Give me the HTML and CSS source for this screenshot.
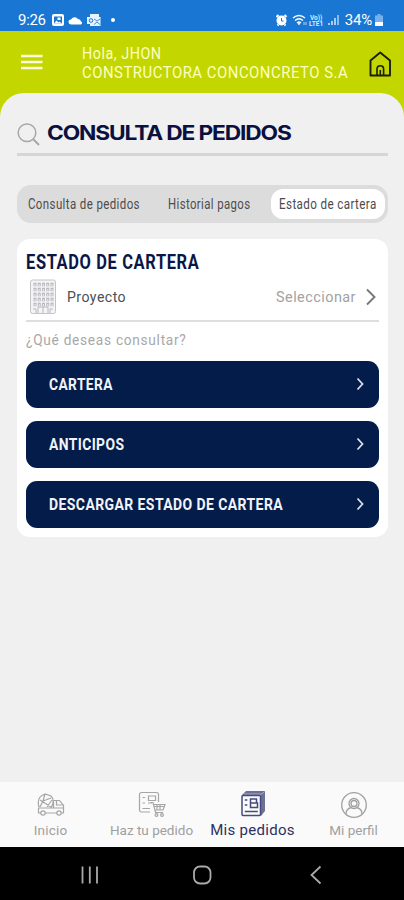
FILE: index.html
```
<!DOCTYPE html>
<html lang="es">
<head>
    <meta charset="UTF-8">
    <title>Consulta de pedidos</title>
    <link rel="stylesheet" href="styles.css">
</head>
<body>
    <div class="status-bar">
        <span class="time">9:26</span>
        <svg class="status-left" width="60" height="14" viewBox="0 0 60 14">
            <rect x="1" y="1" width="12" height="12" rx="2" fill="#fff"/>
            <path d="M3 3.500h8v7H3z" fill="#1976d2"/>
            <path d="M3 10.500l2.500-3 2 2 1-1 2.500 2z" fill="#fff"/>
            <path d="M6.500 4.500h3v2.500h-3z" fill="#fff"/>
            <path d="M20 11.500a2.500 2.500 0 0 1 0-5 4 4 0 0 1 7-.5 3 3 0 0 1 3 2.500 1.600 1.600 0 0 1 0 3z" fill="#fff"/>
            <path d="M39 1h9v3h1.500v9H39v-2h-3V4h3z" fill="#e5f2ff"/>
            <circle cx="40" cy="7.500" r="1.800" fill="none" stroke="#1976d2"/>
            <path d="M43 6l3 2 3-2M43 11.500l3-2.500 3 2.500" fill="none" stroke="#1976d2" stroke-width=".8"/>
        </svg>
        <span class="dot"></span>
        <svg class="status-right" width="66" height="14" viewBox="0 0 66 14">
            <circle cx="6.500" cy="7.500" r="5" fill="#fff"/>
            <path d="M1.500 4l2-2M9.500 2l2 2M2.500 12.500l1-1M10.500 12.500l-1-1" stroke="#fff" stroke-width="2"/>
            <path d="M6.500 5v3h2" fill="none" stroke="#1976d2"/>
            <path d="M18 5q6-5 12 0M20 7.500q4-3.500 8 0M22 10q2-2 4 0" fill="none" stroke="#fff" stroke-width="1.300"/>
            <path d="M23 10h2l-1 2zM29 9v3M31 9v3" fill="#fff" stroke="#d5e8ff" stroke-width=".8"/>
            <text x="35" y="6.500" class="lte">Vo))</text>
            <text x="34" y="13" class="lte">LTE1</text>
            <path d="M54 12v-2M57 12V8M60 12V5" stroke="#d5e8ff" stroke-width="1.500"/>
            <path d="M63 12V2" stroke="#d5e8ff" stroke-width="1.200"/>
        </svg>
        <span class="percent">34%</span>
        <svg class="battery" width="8" height="12" viewBox="0 0 8 12">
            <path d="M2.500 0h3v1.500H8V12H0V1.500h2.500z" fill="#75b0ee"/>
            <path d="M0 8h8v4H0z" fill="#fff"/>
        </svg>
    </div>

    <header class="header">
        <svg class="menu" width="22" height="16" viewBox="0 0 22 16">
            <path d="M0 2h21.500M0 8h21.500M0 14h21.500" stroke="#fbfde0" stroke-width="2.400"/>
        </svg>
        <div class="greeting">
            <div><span class="fit hello">Hola, JHON</span></div>
            <div><span class="fit company">CONSTRUCTORA CONCONCRETO S.A</span></div>
        </div>
        <svg class="home" width="24" height="28" viewBox="0 0 24 28">
            <path d="M2.500 10.500L12.200 2.500 22 10.500V25.500H2.500z" fill="none" stroke="#192000" stroke-width="1.900" stroke-linejoin="round"/>
            <path d="M9 25v-6a3.300 3.300 0 0 1 6.600 0v6M12.300 25v-5" fill="none" stroke="#192000" stroke-width="1.600"/>
        </svg>
    </header>

    <main class="content">
        <div class="search">
            <svg width="24" height="24" viewBox="0 0 24 24">
                <circle cx="10" cy="9.800" r="8.800" fill="none" stroke="#a7a7a7" stroke-width="1.500"/>
                <path d="M16 16l6 6" stroke="#a7a7a7" stroke-width="2"/>
            </svg>
            <h1><span class="fit title">CONSULTA DE PEDIDOS</span></h1>
        </div>

        <div class="tabs">
            <div class="tab tab-orders"><span class="fit">Consulta de pedidos</span></div>
            <div class="tab tab-history"><span class="fit">Historial pagos</span></div>
            <div class="tab tab-wallet active"><span class="fit">Estado de cartera</span></div>
        </div>

        <section class="card">
            <h2><span class="fit card-title">ESTADO DE CARTERA</span></h2>
            <div class="project">
                <svg width="28" height="36" viewBox="0 0 28 36">
                    <rect x="1.500" y="1" width="25" height="33.500" rx="2" fill="#f4f4f6" stroke="#c4c4c8"/>
                    <path d="M4.500 5.500h20M4.500 10.500h20M4.500 15.500h20M4.500 20.500h20M4.500 25.500h20" stroke="#b9b9bf" stroke-width="3.500" stroke-dasharray="3 1.250"/>
                    <path d="M4.500 6h20M4.500 11h20M4.500 16h20M4.500 21h20M4.500 26h20" stroke="#f4f4f6" stroke-width="1.300" stroke-dasharray="1.200 3.050" stroke-dashoffset="-.9"/>
                    <path d="M9 34v-6h10v6M14 28v6M4 30h3v4M21 34v-4h3" fill="none" stroke="#b9b9bf"/>
                </svg>
                <span class="fit project-label">Proyecto</span>
                <span class="fit select-label">Seleccionar</span>
                <svg width="12" height="18" viewBox="0 0 12 18">
                    <path d="M2 1.500l7.500 7.500L2 16.500" fill="none" stroke="#777" stroke-width="1.900"/>
                </svg>
            </div>
            <p class="question"><span class="fit question-label">¿Qué deseas consultar?</span></p>
            <div class="actions">
                <button class="action"><span class="fit a-wallet">CARTERA</span>
                    <svg width="8" height="14" viewBox="0 0 8 14"><path d="M1.500 1.500L6.500 7l-5 5.500"/></svg>
                </button>
                <button class="action"><span class="fit a-advance">ANTICIPOS</span>
                    <svg width="8" height="14" viewBox="0 0 8 14"><path d="M1.500 1.500L6.500 7l-5 5.500"/></svg>
                </button>
                <button class="action"><span class="fit a-download">DESCARGAR ESTADO DE CARTERA</span>
                    <svg width="8" height="14" viewBox="0 0 8 14"><path d="M1.500 1.500L6.500 7l-5 5.500"/></svg>
                </button>
            </div>
        </section>
    </main>

    <nav class="bottom-nav">
        <div class="nav-item">
            <svg width="28" height="28" viewBox="0 0 28 28">
                <g fill="none" stroke="#a6a6a6" stroke-width="1.200">
                    <path d="M4 22H1.500v-5h25v5H24M8 22h12M16.500 17V9.500h6l4 5V17M19.500 10v4h6"/>
                    <path d="M2 16C0 9 2 5 8 3l6 2c3 3 3 7 0 12M3 9l11 7M8 3l-2 7 8-3M6 10l-3 6M10 16l5-7"/>
                    <circle cx="6" cy="22" r="2.200"/>
                    <circle cx="22" cy="22" r="2.200"/>
                </g>
            </svg>
            <span class="fit n-home">Inicio</span>
        </div>
        <div class="nav-item">
            <svg width="28" height="28" viewBox="0 0 28 28">
                <g fill="none" stroke="#a6a6a6" stroke-width="1.200">
                    <path d="M12 21H3.500a2 2 0 0 1-2-2V3.500a2 2 0 0 1 2-2h15a2 2 0 0 1 2 2V11"/>
                    <path d="M10.500 5h7v4.500h-7zM4.500 6.500h2.500M4.500 12h2.500M10 12h4M4.500 17.500H12"/>
                    <path d="M12.500 11.500h2.500l2.500 10h7.500M15.500 13.500H27l-2 5.500H17M16 15.500h10M19 14v5M22 14v5"/>
                    <circle cx="18.500" cy="24" r="1.400"/>
                    <circle cx="24" cy="24" r="1.400"/>
                </g>
            </svg>
            <span class="fit n-order">Haz tu pedido</span>
        </div>
        <div class="nav-item current">
            <svg width="28" height="28" viewBox="0 0 28 28">
                <path d="M3 4l4-4h19v20l-4 5V4z" fill="#6d7197"/>
                <path d="M5 3h18l2.500-2.500" fill="none" stroke="#c2c5d8" stroke-width=".7"/>
                <rect x="3" y="4.500" width="18.500" height="20" rx="1" fill="#fafafa" stroke="#454b7c" stroke-width="1.500"/>
                <path d="M11.500 8h6v4h-6zM11.500 12h7v4.500h-7zM5.800 9h2.500M5.800 14h2.500M5.800 20.500h13" fill="none" stroke="#454b7c" stroke-width="1.500"/>
            </svg>
            <span class="fit n-orders">Mis pedidos</span>
        </div>
        <div class="nav-item">
            <svg width="28" height="28" viewBox="0 0 28 28">
                <g fill="none" stroke="#a0a0a0" stroke-width="1.300">
                    <circle cx="14" cy="14" r="12.300"/>
                    <circle cx="14" cy="12.500" r="5"/>
                    <circle cx="14" cy="12.500" r="3"/>
                    <path d="M6 23c0-4 3-6 5.500-6.500M22 23c0-4-3-6-5.500-6.500"/>
                </g>
            </svg>
            <span class="fit n-profile">Mi perfil</span>
        </div>
    </nav>

    <div class="system-nav">
        <svg width="18" height="20" viewBox="0 0 18 20"><path d="M1.500 1.500v17M8.800 1.500v17M16 1.500v17"/></svg>
        <svg class="home-key" width="20" height="20" viewBox="0 0 20 20"><rect x="2" y="1.500" width="16.500" height="17" rx="6"/></svg>
        <svg width="12" height="20" viewBox="0 0 12 20"><path d="M10.500 1.500L1.500 10l9 8.500"/></svg>
    </div>
</body>
</html>
```
FILE: styles.css
```
* {
    box-sizing: border-box;
}

body {
    margin: 0;
    height: 900px;
    display: flex;
    flex-direction: column;
    font-family: Roboto, "Liberation Sans", sans-serif;
    background-color: #c3d600;
    overflow: hidden;
}

h1, h2, p {
    margin: 0;
}

svg {
    display: block;
    flex-shrink: 0;
}

.fit {
    display: inline-block;
    white-space: nowrap;
    transform-origin: left center;
}

.status-bar {
    height: 31px;
    padding: 8px 21px 0 18px;
    display: flex;
    align-items: center;
    background-color: #1976d2;
    color: #fff;
    font-size: 15px;
}

.time {
    width: 33px;
    letter-spacing: -0.3px;
}

.dot {
    width: 4px;
    height: 4px;
    border-radius: 50%;
    background-color: #fff;
}

.status-right {
    margin-left: auto;
}

.lte {
    font-size: 6.5px;
    font-weight: 700;
    fill: #d5e8ff;
}

.percent {
    margin-left: 4px;
    letter-spacing: -0.2px;
}

.battery {
    margin-left: 3px;
}

.header {
    height: 62px;
    padding: 13px 12px 0 21px;
    display: flex;
    align-items: flex-start;
    color: #fcffc0;
}

.menu {
    margin-top: 10px;
}

.greeting {
    flex: 1;
    min-width: 0;
    margin-left: 39px;
    font-size: 16.5px;
    line-height: 19px;
    letter-spacing: 0.6px;
}

.hello {
    transform: scaleX(0.87);
}

.company {
    transform: scaleX(0.9);
}

.home {
    margin-top: 6px;
}

.content {
    flex: 1;
    padding: 28px 16px 0 17px;
    background-color: #f0f0f0;
    border-radius: 24px 24px 0 0;
}

.search {
    height: 35px;
    display: flex;
    border-bottom: 3px solid #d6d6d6;
}

.search svg {
    margin-top: 2px;
}

h1 {
    margin-left: 6px;
    font-family: Inter, sans-serif;
    font-size: 20px;
    font-weight: 700;
    line-height: 25px;
    letter-spacing: -1px;
    color: #0a1040;
}

.title {
    transform: scaleX(1.137);
}

.tabs {
    height: 38px;
    margin-top: 29px;
    padding: 4px;
    display: flex;
    background-color: #dcdcdc;
    border-radius: 14px;
    font-size: 15px;
    letter-spacing: 0.5px;
    color: #4c4c4c;
}

.tab {
    height: 30px;
    line-height: 31px;
}

.tab-orders {
    width: 140px;
    padding-left: 7px;
}

.tab-orders .fit {
    transform: scaleX(0.767);
}

.tab-history {
    width: 110px;
    padding-left: 7px;
}

.tab-history .fit {
    transform: scaleX(0.76);
}

.tab-wallet {
    width: 114px;
    padding-left: 8px;
}

.tab-wallet .fit {
    transform: scaleX(0.775);
}

.active {
    background-color: #fff;
    border-radius: 12px;
}

.card {
    height: 298px;
    margin-top: 16px;
    padding: 10px 9px 0;
    background-color: #fff;
    border-radius: 13px;
}

h2 {
    font-size: 21px;
    line-height: 26px;
    letter-spacing: 0.8px;
    color: #0a1746;
}

.card-title {
    transform: scaleX(0.783);
}

.project {
    height: 47px;
    padding: 0 2px 2px 3px;
    display: flex;
    align-items: center;
    border-bottom: 2px solid #dedede;
    font-size: 15.5px;
    letter-spacing: 0.5px;
    color: #4b4f59;
}

.project-label {
    margin-left: 10px;
    transform: scaleX(0.91);
}

.select-label {
    width: 80px;
    margin: 0 9px 0 auto;
    color: #a2a2a2;
    transform: scaleX(0.93);
}

.question {
    height: 39px;
    font-size: 15.5px;
    line-height: 36px;
    letter-spacing: 0.8px;
    color: #a8a8a8;
}

.question-label {
    transform: scaleX(0.884);
}

.actions {
    display: flex;
    flex-direction: column;
    gap: 13px;
}

.action {
    height: 47px;
    padding: 0 15px 2px 23px;
    display: flex;
    align-items: center;
    justify-content: space-between;
    background-color: #041c4a;
    color: #f1f3f7;
    border: none;
    border-radius: 11px;
    font-family: inherit;
    font-size: 17px;
    font-weight: 700;
    letter-spacing: 0.5px;
}

.a-wallet {
    transform: scaleX(0.81);
}

.a-advance {
    transform: scaleX(0.815);
}

.a-download {
    transform: scaleX(0.823);
}

.action path {
    fill: none;
    stroke: #d8dde6;
    stroke-width: 1.8;
}

.bottom-nav {
    height: 65px;
    padding-top: 9px;
    display: grid;
    grid-template-columns: repeat(4, 101px);
    background-color: #fafafa;
    color: #a0a0a0;
    font-size: 13.5px;
}

.nav-item {
    display: flex;
    flex-direction: column;
    align-items: center;
}

.nav-item .fit {
    line-height: 22px;
}

.n-home {
    letter-spacing: 0.2px;
}

.current {
    color: #2c315f;
}

.current .fit {
    font-size: 15px;
    letter-spacing: 0.3px;
}

.system-nav {
    height: 53px;
    padding: 3px 82px 0 81px;
    display: flex;
    align-items: center;
    justify-content: space-between;
    background-color: #000;
}

.system-nav svg {
    fill: none;
    stroke: #aaa;
    stroke-width: 1.8;
}

.system-nav .home-key {
    margin-right: 5px;
}
```
